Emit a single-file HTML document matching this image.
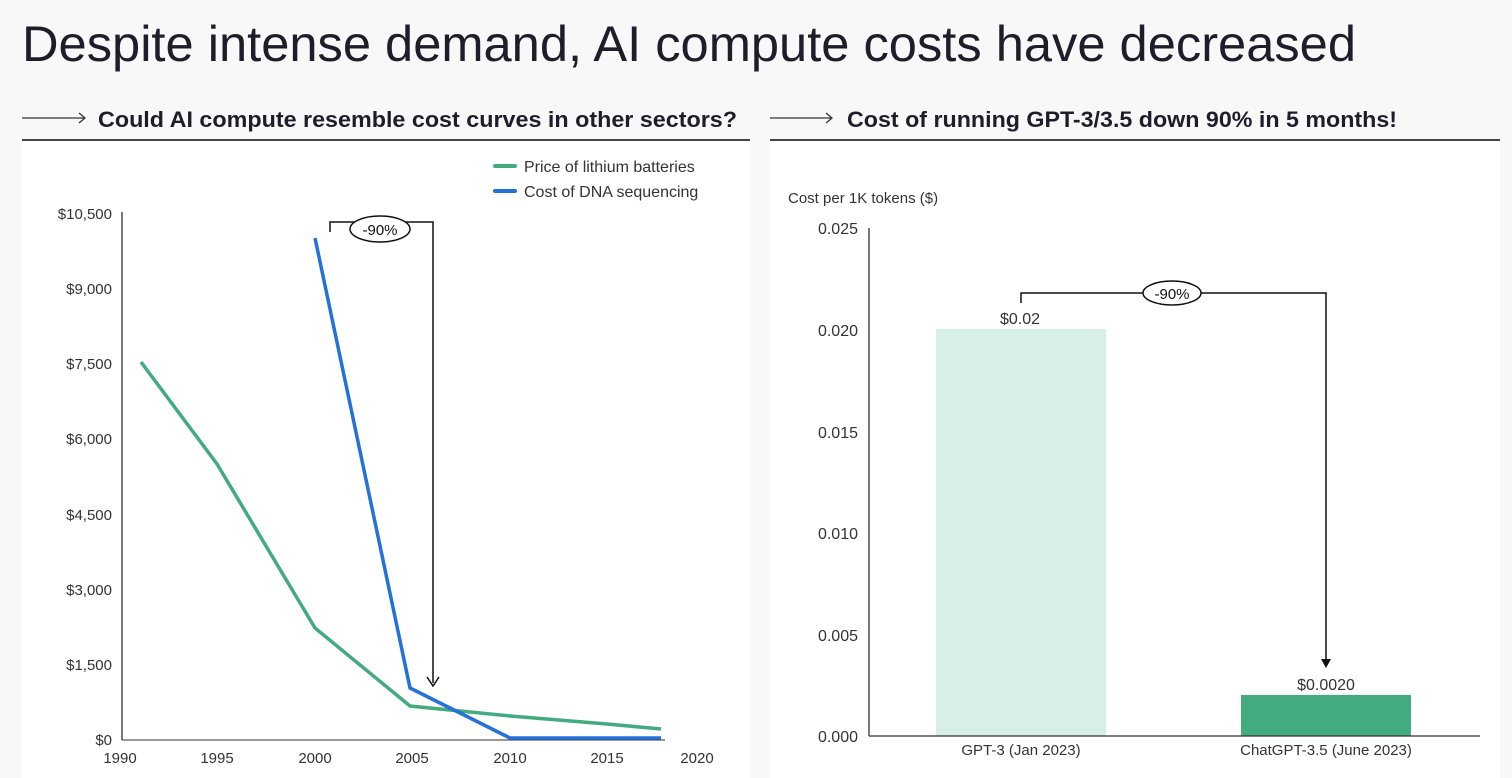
<!DOCTYPE html>
<html><head><style>
html,body{margin:0;padding:0;background:#f8f8f8;}
svg{display:block;font-family:"Liberation Sans",Arial,sans-serif;}
</style></head><body>
<svg width="1512" height="778" viewBox="0 0 1512 778">
<rect width="1512" height="778" fill="#f8f8f8"/>
<text x="22" y="61" font-size="50" fill="#1e1e2a" textLength="1334" lengthAdjust="spacingAndGlyphs">Despite intense demand, AI compute costs have decreased</text>
<!-- subheadings -->
<g stroke="#333" stroke-width="1.3" fill="none">
<line x1="22" y1="118" x2="84" y2="118"/><path d="M79 113 L85 118 L79 123"/>
<line x1="770" y1="118" x2="831" y2="118"/><path d="M826 113 L832 118 L826 123"/>
</g>
<text x="98" y="127" font-size="22" font-weight="bold" fill="#1e1e2a" textLength="639" lengthAdjust="spacingAndGlyphs">Could AI compute resemble cost curves in other sectors?</text>
<text x="847" y="127" font-size="22" font-weight="bold" fill="#1e1e2a" textLength="550" lengthAdjust="spacingAndGlyphs">Cost of running GPT-3/3.5 down 90% in 5 months!</text>
<rect x="22" y="141" width="728" height="640" fill="#fff"/>
<rect x="770" y="141" width="730" height="640" fill="#fff"/>
<line x1="22" y1="140" x2="750" y2="140" stroke="#444" stroke-width="2"/>
<line x1="770" y1="140" x2="1500" y2="140" stroke="#444" stroke-width="2"/>

<!-- left chart -->
<g font-size="15" fill="#333" text-anchor="end">
<text x="112" y="219">$10,500</text><text x="112" y="294">$9,000</text><text x="112" y="369">$7,500</text>
<text x="112" y="444">$6,000</text><text x="112" y="520">$4,500</text><text x="112" y="595">$3,000</text>
<text x="112" y="670">$1,500</text><text x="112" y="745">$0</text>
</g>
<g font-size="15" fill="#333" text-anchor="middle">
<text x="120" y="763">1990</text><text x="217" y="763">1995</text><text x="315" y="763">2000</text>
<text x="412" y="763">2005</text><text x="510" y="763">2010</text><text x="607" y="763">2015</text><text x="697" y="763">2020</text>
</g>
<line x1="122" y1="212" x2="122" y2="740" stroke="#333" stroke-width="1.3"/>
<line x1="122" y1="740" x2="665" y2="740" stroke="#333" stroke-width="1"/>
<polyline points="141,362 217,464 315,628 410,706 510,716 607,724 661,729" fill="none" stroke="#43ab80" stroke-width="3.5"/>
<polyline points="315,238 410,688 510,738 661,738" fill="none" stroke="#2471d9" stroke-width="3.5"/>
<path d="M330 232 V222 H433 V683" fill="none" stroke="#111" stroke-width="1.5"/>
<path d="M427 677 L433 686 L439 677" fill="none" stroke="#111" stroke-width="1.5"/>
<ellipse cx="380" cy="229" rx="30" ry="13" fill="#fff" stroke="#111" stroke-width="1.5"/>
<text x="380" y="235" font-size="15" text-anchor="middle" fill="#111">-90%</text>
<line x1="495" y1="166" x2="515" y2="166" stroke="#43ab80" stroke-width="4" stroke-linecap="round"/>
<line x1="495" y1="191" x2="515" y2="191" stroke="#2471d9" stroke-width="4" stroke-linecap="round"/>
<text x="524" y="172" font-size="16" fill="#333">Price of lithium batteries</text>
<text x="524" y="197" font-size="16" fill="#333">Cost of DNA sequencing</text>

<!-- right chart -->
<text x="788" y="203" font-size="15" fill="#333">Cost per 1K tokens ($)</text>
<g font-size="16" fill="#333" text-anchor="end">
<text x="858" y="234">0.025</text><text x="858" y="336">0.020</text><text x="858" y="438">0.015</text>
<text x="858" y="539">0.010</text><text x="858" y="641">0.005</text><text x="858" y="742">0.000</text>
</g>
<rect x="936" y="329" width="170" height="407" fill="#d8efe5"/>
<rect x="1241" y="695" width="170" height="41" fill="#43ab80"/>
<line x1="869" y1="228" x2="869" y2="736" stroke="#333" stroke-width="1.3"/>
<line x1="869" y1="736" x2="1480" y2="736" stroke="#333" stroke-width="1.3"/>
<text x="1020" y="324" font-size="16" fill="#333" text-anchor="middle">$0.02</text>
<text x="1326" y="690" font-size="16" fill="#333" text-anchor="middle">$0.0020</text>
<g font-size="15" fill="#333" text-anchor="middle">
<text x="1021" y="755">GPT-3 (Jan 2023)</text><text x="1326" y="755">ChatGPT-3.5 (June 2023)</text>
</g>
<path d="M1021 303 V293 H1326 V665" fill="none" stroke="#111" stroke-width="1.5"/>
<path d="M1321 659 L1326 668 L1331 659 Z" fill="#111"/>
<ellipse cx="1172" cy="293" rx="29" ry="12" fill="#fff" stroke="#111" stroke-width="1.5"/>
<text x="1172" y="299" font-size="15" text-anchor="middle" fill="#111">-90%</text>
</svg>
</body></html>
